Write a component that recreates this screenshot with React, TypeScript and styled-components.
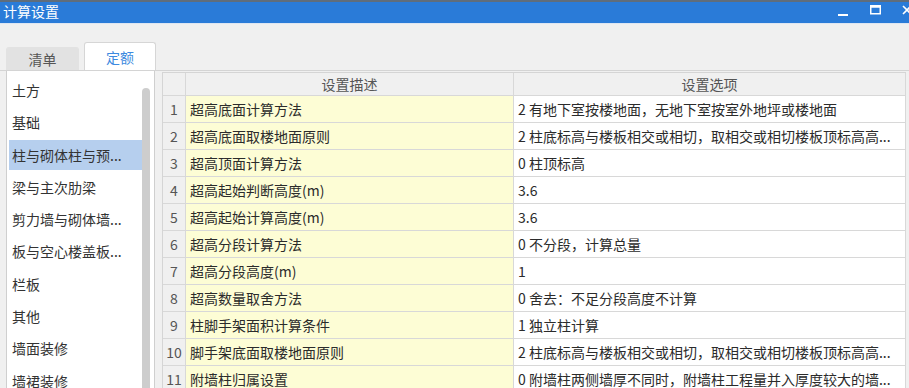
import React from 'react';
import styled, { createGlobalStyle } from 'styled-components';

const Global = createGlobalStyle`
  html, body { margin: 0; padding: 0; }
  body {
    font-family: "Noto Sans CJK SC", "Noto Sans", sans-serif;
    background: #f0f0f0;
  }
  * { box-sizing: border-box; }
`;

const Window = styled.div`
  width: 909px;
  height: 388px;
  overflow: hidden;
  background: #f0f0f0;
  display: flex;
  flex-direction: column;
`;

const TitleBar = styled.div`
  flex-shrink: 0;
  height: 24px;
  border-top: 2px solid #5f6d7c;
  border-bottom: 1px solid #dde6f2;
  background: #2a7bd8;
  display: flex;
  align-items: flex-start;
  padding-left: 3px;
  color: #ffffff;
  font-size: 14px;
  line-height: 16px;
`;

const Title = styled.span`
  padding-top: 1px;
`;

const Controls = styled.div`
  margin-left: auto;
  margin-right: -14px;
  display: flex;
  height: 100%;
`;

const CtrlButton = styled.div`
  width: 32px;
  height: 100%;
  display: flex;
  align-items: center;
  justify-content: center;
`;

const Body = styled.div`
  flex: 1;
  display: flex;
  flex-direction: column;
  padding-top: 18px;
  min-height: 0;
`;

const TabStrip = styled.div`
  height: 28px;
  display: flex;
  align-items: flex-end;
  gap: 5px;
  padding-left: 6px;
  flex-shrink: 0;
`;

const Tab = styled.div<{ $active?: boolean }>`
  width: ${p => (p.$active ? 72 : 73)}px;
  height: ${p => (p.$active ? 28 : 23)}px;
  display: flex;
  align-items: center;
  justify-content: center;
  font-size: 14px;
  border-radius: 3px 3px 0 0;
  color: ${p => (p.$active ? '#3d8ae0' : '#555555')};
  background: ${p => (p.$active ? '#ffffff' : '#e2e2e2')};
  border: 1px solid ${p => (p.$active ? '#d6d6d6' : '#e2e2e2')};
  border-bottom: none;
`;

const Content = styled.div`
  flex: 1;
  display: flex;
  gap: 7px;
  padding-left: 6px;
  border-top: 1px solid #d4d4d4;
  min-height: 0;
`;

const SidePanel = styled.div`
  width: 149px;
  flex-shrink: 0;
  background: #ffffff;
  border-left: 1px solid #cfcfcf;
  border-right: 1px solid #cfcfcf;
  display: flex;
`;

const List = styled.div`
  flex: 1;
  padding-top: 4px;
  display: flex;
  flex-direction: column;
`;

const ListItem = styled.div<{ $selected?: boolean }>`
  flex-shrink: 0;
  height: 30px;
  margin: 0 0 2.3px 2px;
  padding-left: 3px;
  display: flex;
  align-items: center;
  font-size: 14px;
  color: #333333;
  white-space: nowrap;
  background: ${p => (p.$selected ? '#b6cfee' : 'transparent')};
`;

const ScrollTrack = styled.div`
  width: 12px;
  flex-shrink: 0;
  padding: 17px 3px 0 0;
`;

const ScrollThumb = styled.div`
  width: 8px;
  height: 400px;
  border-radius: 4px;
  background: #cdcdcd;
`;

const TableWrap = styled.div`
  padding-top: 1px;
  flex-shrink: 0;
`;

const Table = styled.div`
  display: grid;
  grid-template-columns: 23px 328px 392px;
  grid-template-rows: 23px;
  grid-auto-rows: 27px;
  border-left: 1px solid #d5d5d5;
  border-top: 1px solid #d5d5d5;
`;

const Cell = styled.div<{ $kind: 'head' | 'num' | 'desc' | 'opt' }>`
  border-right: 1px solid #d8d8d8;
  border-bottom: 1px solid #d8d8d8;
  display: flex;
  align-items: center;
  font-size: 14px;
  white-space: nowrap;
  overflow: hidden;
  justify-content: ${p => (p.$kind === 'head' || p.$kind === 'num' ? 'center' : 'flex-start')};
  padding-left: ${p => (p.$kind === 'desc' || p.$kind === 'opt' ? '4px' : '0')};
  color: ${p => (p.$kind === 'head' || p.$kind === 'num' ? '#555555' : '#2b2b2b')};
  background: ${p =>
    p.$kind === 'desc' ? '#fdfdd5' : p.$kind === 'opt' ? '#ffffff' : '#f0f0f0'};
`;

const listItems = [
  '土方',
  '基础',
  '柱与砌体柱与预...',
  '梁与主次肋梁',
  '剪力墙与砌体墙...',
  '板与空心楼盖板...',
  '栏板',
  '其他',
  '墙面装修',
  '墙裙装修',
];

const rows: [string, string][] = [
  ['超高底面计算方法', '2 有地下室按楼地面，无地下室按室外地坪或楼地面'],
  ['超高底面取楼地面原则', '2 柱底标高与楼板相交或相切，取相交或相切楼板顶标高高...'],
  ['超高顶面计算方法', '0 柱顶标高'],
  ['超高起始判断高度(m)', '3.6'],
  ['超高起始计算高度(m)', '3.6'],
  ['超高分段计算方法', '0 不分段，计算总量'],
  ['超高分段高度(m)', '1'],
  ['超高数量取舍方法', '0 舍去：不足分段高度不计算'],
  ['柱脚手架面积计算条件', '1 独立柱计算'],
  ['脚手架底面取楼地面原则', '2 柱底标高与楼板相交或相切，取相交或相切楼板顶标高高...'],
  ['附墙柱归属设置', '0 附墙柱两侧墙厚不同时，附墙柱工程量并入厚度较大的墙...'],
];

export default function App() {
  return (
    <>
      <Global />
      <Window>
        <TitleBar>
          <Title>计算设置</Title>
          <Controls>
            <CtrlButton>
              <svg width="10" height="10" viewBox="0 0 10 10">
                <rect x="0" y="6" width="10" height="2" fill="#ffffff" />
              </svg>
            </CtrlButton>
            <CtrlButton>
              <svg width="11" height="10" viewBox="0 0 11 10" style={{ marginTop: -6 }}>
                <rect x="0.75" y="0.75" width="9.5" height="8" fill="none" stroke="#ffffff" strokeWidth="1.5" />
                <rect x="0.75" y="0.75" width="9.5" height="2" fill="#ffffff" />
              </svg>
            </CtrlButton>
            <CtrlButton>
              <svg width="10" height="10" viewBox="0 0 10 10" style={{ marginTop: -6 }}>
                <path d="M1 1 L9 9 M9 1 L1 9" stroke="#ffffff" strokeWidth="1.6" />
              </svg>
            </CtrlButton>
          </Controls>
        </TitleBar>
        <Body>
          <TabStrip>
            <Tab>清单</Tab>
            <Tab $active>定额</Tab>
          </TabStrip>
          <Content>
            <SidePanel>
              <List>
                {listItems.map((t, i) => (
                  <ListItem key={t} $selected={i === 2}>
                    {t}
                  </ListItem>
                ))}
              </List>
              <ScrollTrack>
                <ScrollThumb />
              </ScrollTrack>
            </SidePanel>
            <TableWrap>
              <Table>
                <Cell $kind="head" />
                <Cell $kind="head">设置描述</Cell>
                <Cell $kind="head">设置选项</Cell>
                {rows.map(([d, o], i) => (
                  <React.Fragment key={i}>
                    <Cell $kind="num">{i + 1}</Cell>
                    <Cell $kind="desc">{d}</Cell>
                    <Cell $kind="opt">{o}</Cell>
                  </React.Fragment>
                ))}
              </Table>
            </TableWrap>
          </Content>
        </Body>
      </Window>
    </>
  );
}
